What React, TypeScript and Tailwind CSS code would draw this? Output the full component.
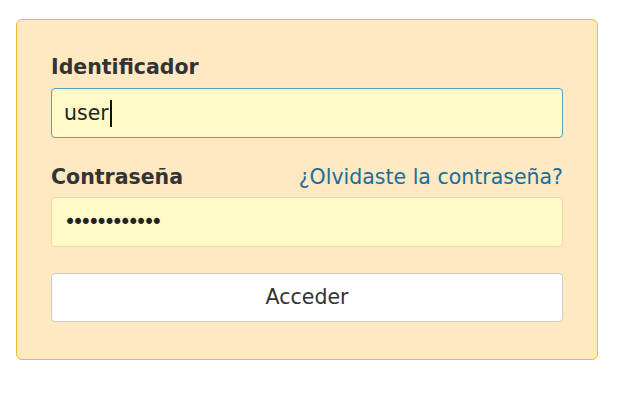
export default function App() {
  return (
    <div className="w-[628px] h-[400px] bg-white pt-[19px] pl-[16px] font-['DejaVu_Sans',sans-serif]">
      <form
        className="w-[582px] rounded-[6px] border border-[#f6b92c] bg-[#fee9c2] px-[34px] pt-[35px] pb-[37px]"
        onSubmit={(e) => e.preventDefault()}
      >
        {/* Identificador */}
        <label className="block text-[20.5px] leading-[25px] font-bold text-[#333333]">Identificador</label>
        <div className="mt-[8px] flex h-[50px] items-center rounded-[4px] border border-[#5b9ec0] bg-[#fffac8] px-[12px] text-[20.5px] text-[#222222]">
          <span>user</span>
          <span className="ml-px inline-block h-[27px] w-[2px] bg-[#111111]" />
        </div>

        {/* Contraseña */}
        <div className="mt-[27px] flex items-baseline justify-between">
          <label className="text-[20.5px] leading-[25px] font-bold text-[#333333]">Contraseña</label>
          <a href="#" className="text-[20.5px] leading-[25px] text-[#1d6b99]">
            ¿Olvidaste la contraseña?
          </a>
        </div>
        <input
          type="password"
          defaultValue="abcdefghijkl"
          className="mt-[7px] block h-[50px] w-full rounded-[4px] border border-[#f0d89c] bg-[#fffac8] px-[12px] text-[20.5px] tracking-[-4.2px] text-[#222222] outline-none"
        />

        <button
          type="submit"
          className="mt-[26px] block h-[49px] w-full rounded-[4px] border border-[#cccccc] bg-white text-[20.5px] text-[#333333]"
        >
          Acceder
        </button>
      </form>
    </div>
  );
}
